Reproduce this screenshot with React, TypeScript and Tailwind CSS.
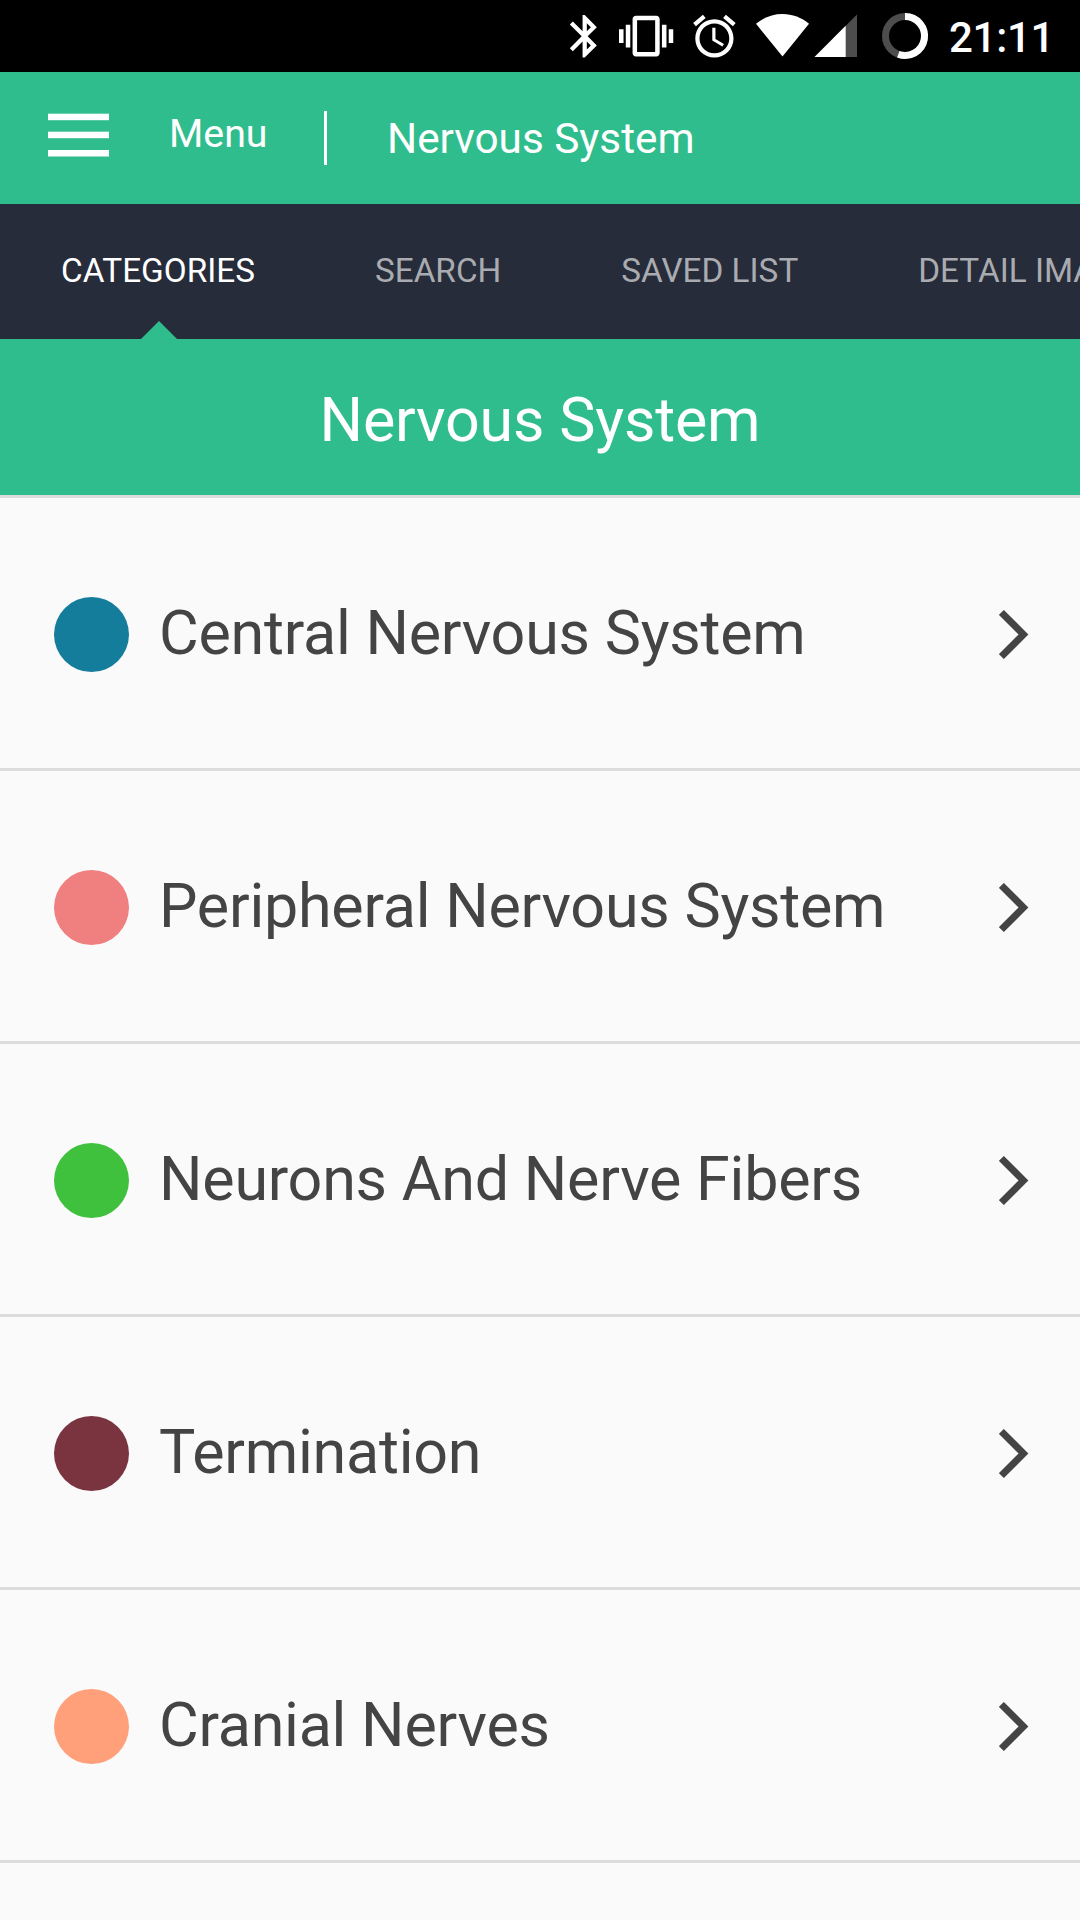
interface Category {
  name: string;
  color: string;
}

const categories: Category[] = [
  { name: "Central Nervous System", color: "bg-[#147d9b]" },
  { name: "Peripheral Nervous System", color: "bg-[#f08080]" },
  { name: "Neurons And Nerve Fibers", color: "bg-[#3fc13e]" },
  { name: "Termination", color: "bg-[#7a343f]" },
  { name: "Cranial Nerves", color: "bg-[#ffa07a]" },
];

const tabs = ["CATEGORIES", "SEARCH", "SAVED LIST", "DETAIL IMAGES"];

function StatusBar() {
  return (
    <div className="flex h-[72px] justify-end bg-black pr-[30px] text-white">
      <svg className="h-[72px] w-[380px] shrink-0" viewBox="550 0 380 72" fill="currentColor">
        {/* bluetooth */}
        <path
          transform="translate(559.2 10.8) scale(2.125)"
          d="M17.71 7.71L12 2h-1v7.59L6.41 5 5 6.41 10.59 12 5 17.59 6.41 19 11 14.41V22h1l5.71-5.71-4.3-4.29 4.3-4.29zM13 5.83l1.88 1.88L13 9.59V5.83zm1.88 10.46L13 18.17v-3.76l1.88 1.88z"
        />
        {/* vibrate */}
        <path
          transform="translate(619 9) scale(2.26)"
          d="M0 15h2V9H0v6zm3 2h2V7H3v10zm19-8v6h2V9h-2zm-3 8h2V7h-2v10zM16.5 3h-9C6.67 3 6 3.67 6 4.5v15c0 .83.67 1.5 1.5 1.5h9c.83 0 1.5-.67 1.5-1.5v-15c0-.83-.67-1.5-1.5-1.5zM16 19H8V5h8v14z"
        />
        {/* alarm */}
        <path
          transform="translate(688.9 10.8) scale(2.125)"
          d="M22 5.72l-4.6-3.86-1.29 1.53 4.6 3.86L22 5.72zM7.88 3.39L6.6 1.86 2 5.71l1.29 1.53 4.59-3.85zM12.5 8H11v6l4.75 2.85.75-1.23-4-2.37V8zM12 4c-4.97 0-9 4.03-9 9s4.02 9 9 9c4.97 0 9-4.03 9-9s-4.03-9-9-9zm0 16c-3.87 0-7-3.13-7-7s3.13-7 7-7 7 3.13 7 7-3.13 7-7 7z"
        />
        {/* wifi */}
        <path d="M782.5 56.5L756 23.8C763.5 17.5 772.5 14 782.5 14S801.5 17.5 809 23.8Z" />
        {/* signal */}
        <path d="M857 14.5V57H814.5Z" fill="#4d4d4d" />
        <path d="M845.7 25.8V57H814.5Z" />
        {/* battery */}
        <circle cx="905" cy="36" r="19.5" fill="none" stroke="#4d4d4d" strokeWidth="7" />
        <path d="M905 16.5A19.5 19.5 0 1 1 898.3 54.3" fill="none" stroke="currentColor" strokeWidth="7" />
      </svg>
      <span className="ml-[19px] w-[101px] pt-px text-[42px] leading-[73px] font-medium tracking-[-0.3px] whitespace-nowrap">
        21:11
      </span>
    </div>
  );
}

function Header() {
  return (
    <header className="flex h-[132px] items-start bg-[#30bd8e] pl-12 text-white">
      <svg className="mt-[41px] h-[44px] w-[61px]" viewBox="0 0 61 44" fill="currentColor">
        <rect y="0.7" width="61" height="6.5" />
        <rect y="18.7" width="61" height="6.5" />
        <rect y="37" width="61" height="6.5" />
      </svg>
      <span className="mt-[37px] ml-[60px] w-[155px] text-[39.3px] leading-[50px]">Menu</span>
      <div className="mt-[39px] h-[54px] w-[3px] bg-white" />
      <h1 className="mt-[42px] ml-[60px] text-[42.3px] leading-[50px]">Nervous System</h1>
    </header>
  );
}

function Tabs() {
  return (
    <nav className="flex h-[135px] overflow-hidden bg-[#272c3a] pl-px">
      {tabs.map((tab, i) => (
        <div
          key={tab}
          className={`relative shrink-0 px-[60px] text-[33.3px] leading-[134px] whitespace-nowrap ${
            i === 0 ? "text-white" : "text-[#a9abb0]"
          }`}
        >
          {tab}
          {i === 0 && (
            <svg className="absolute bottom-0 left-1/2 -ml-[17px] h-[18px] w-[36px]" viewBox="0 0 36 18">
              <path d="M0 18L18 0L36 18Z" fill="#30bd8e" />
            </svg>
          )}
        </div>
      ))}
    </nav>
  );
}

function CategoryRow({ name, color }: Category) {
  return (
    <li className="flex h-[273px] items-center border-b-[3px] border-[#dcdcdc] pt-[3px] pl-[54px] pr-[51px] text-[#444]">
      <div className={`size-[75px] shrink-0 rounded-full ${color}`} />
      <span className="-mt-1 ml-[30px] text-[61px] leading-[70px] tracking-[-0.24px]">{name}</span>
      <svg className="ml-auto h-[49px] w-[30px]" viewBox="0 0 30 49">
        <path d="M2.4 2.4L24.5 24.5L2.4 46.6" fill="none" stroke="currentColor" strokeWidth="6.9" />
      </svg>
    </li>
  );
}

export default function App() {
  return (
    <div className="h-[1920px] w-[1080px] overflow-hidden bg-[#fafafa] font-['Roboto',sans-serif]">
      <StatusBar />
      <Header />
      <Tabs />
      <h2 className="h-[159px] border-b-[3px] border-[#dcdcdc] bg-[#30bd8e] pt-[46px] text-center text-[61px] leading-[70px] tracking-[-0.2px] text-white">
        Nervous System
      </h2>
      <ul>
        {categories.map((category) => (
          <CategoryRow key={category.name} {...category} />
        ))}
      </ul>
    </div>
  );
}
